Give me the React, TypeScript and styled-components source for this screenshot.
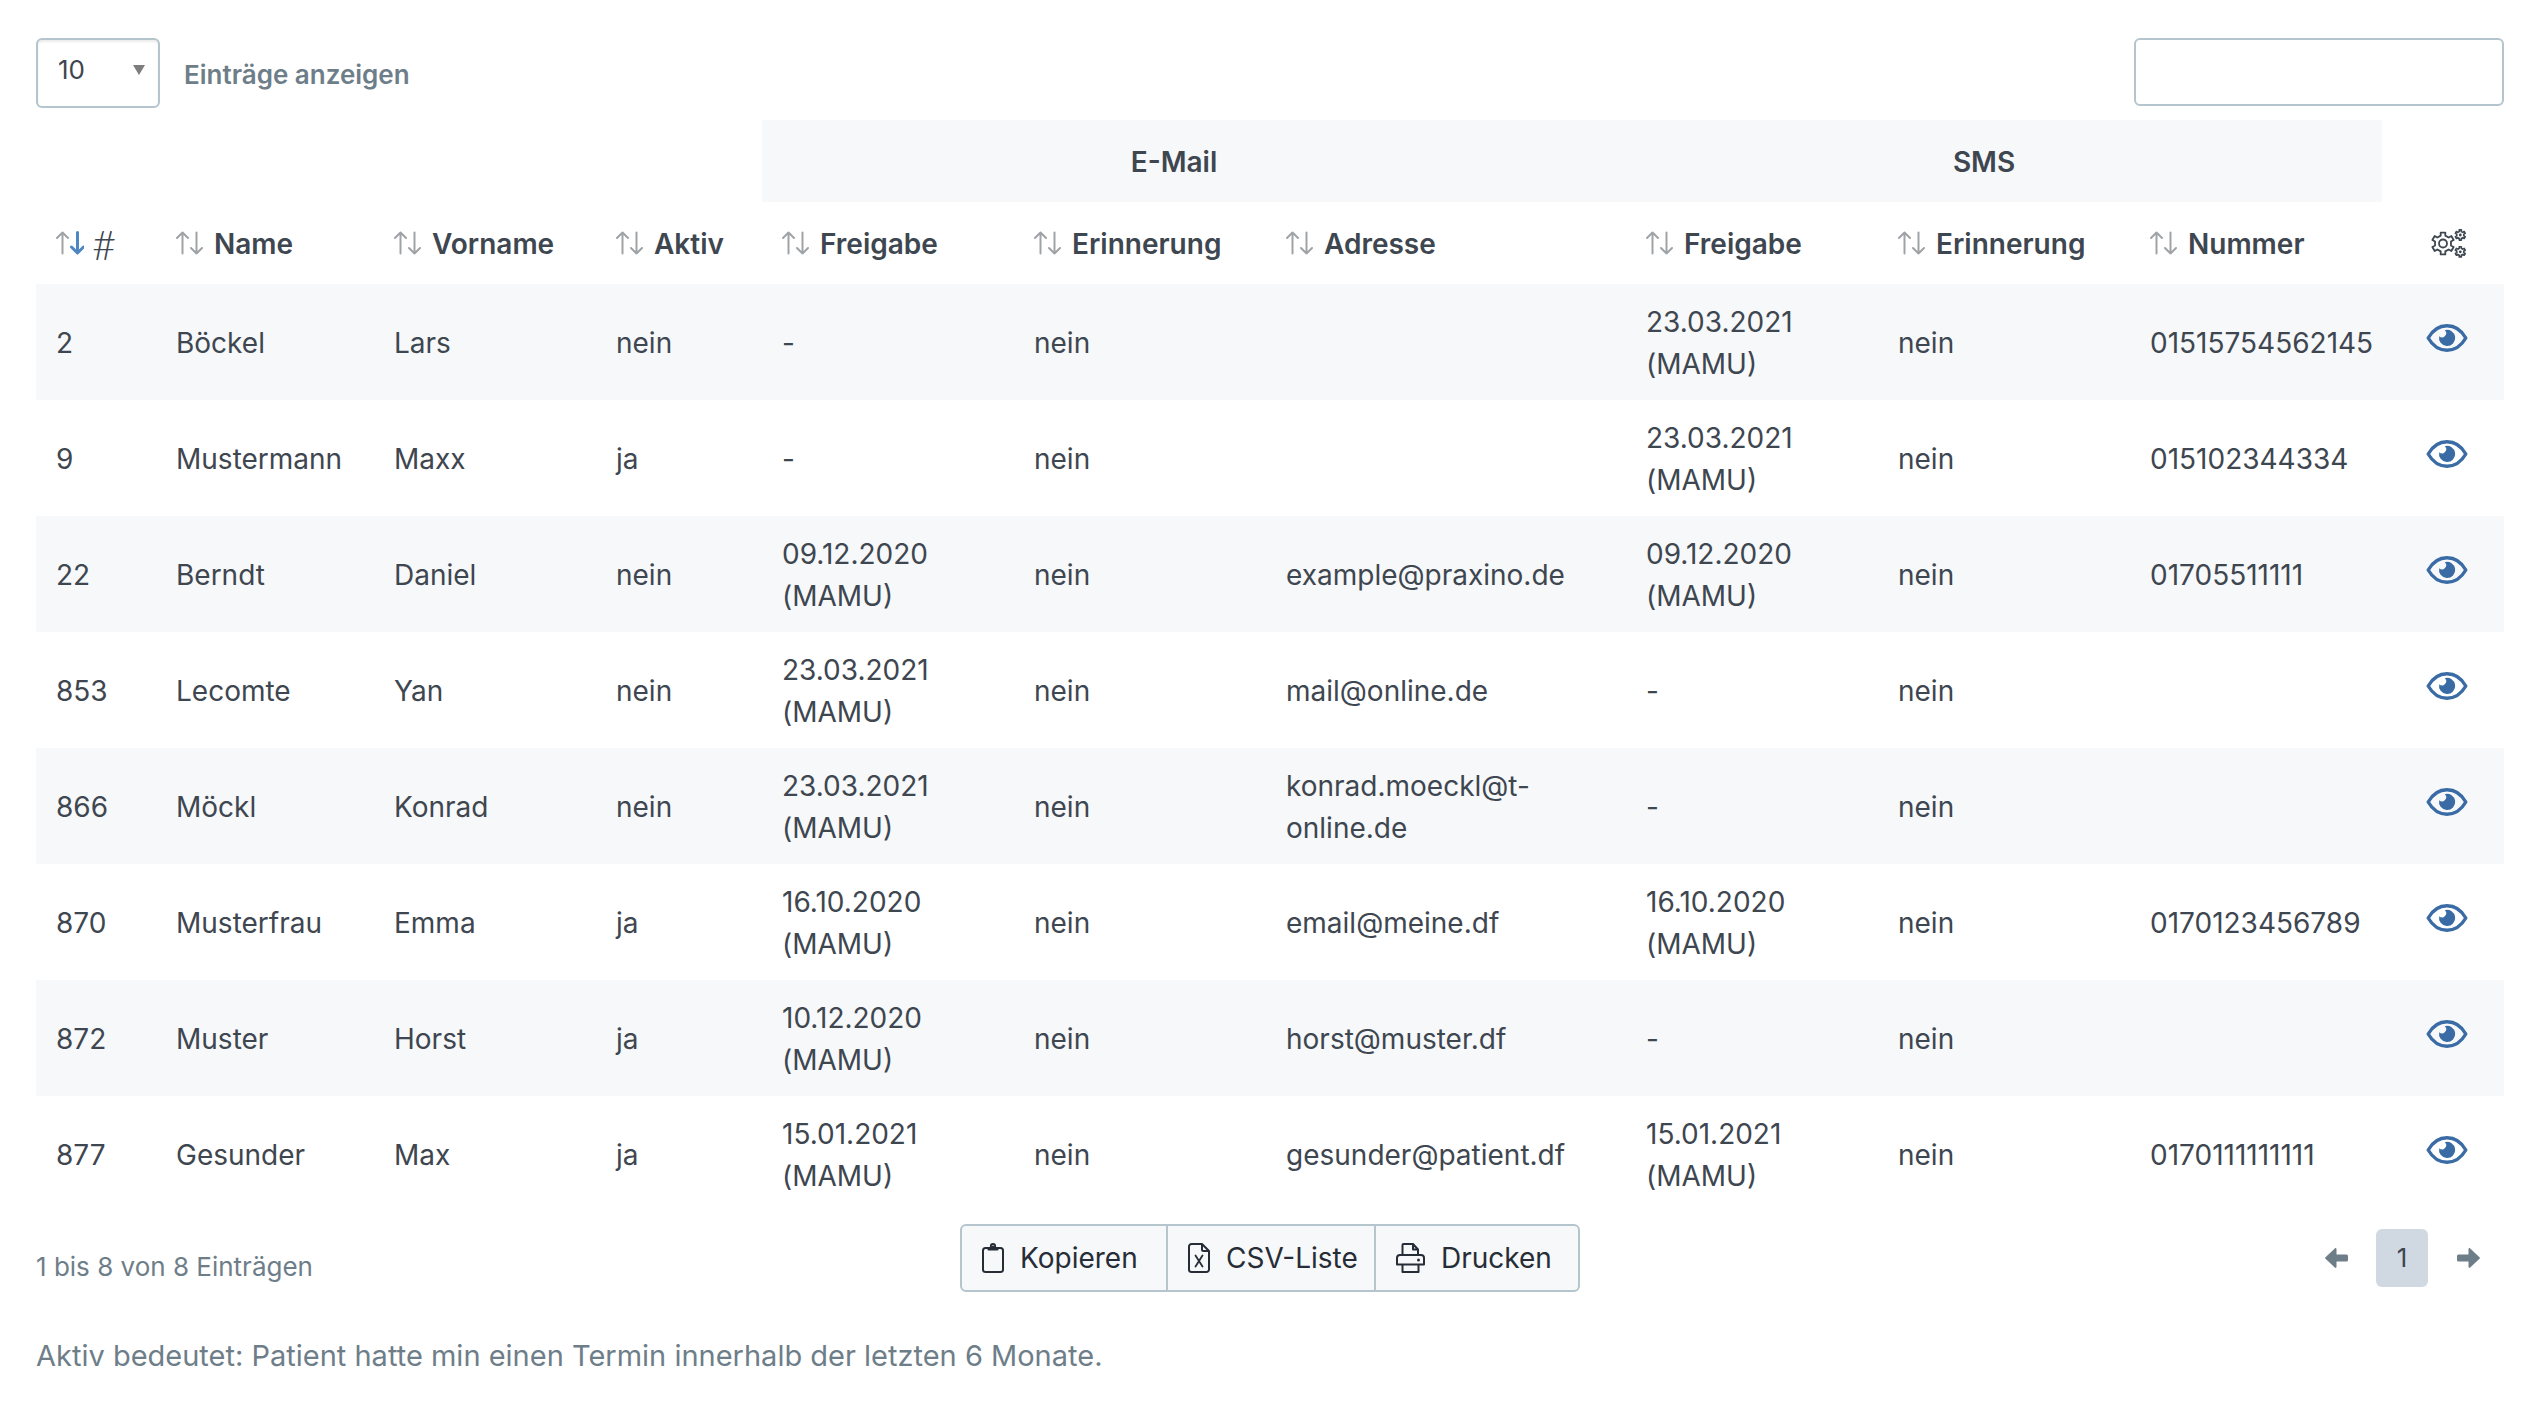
import React from "react";
import styled, { createGlobalStyle } from "styled-components";

const color = {
  text: "#3e4650",
  dark: "#262d36",
  muted: "#6e7e89",
  border: "#b5c5ce",
  stripe: "#f6f8fa",
  page: "#d0d8e2",
  link: "#3a6ba5",
  sortIdle: "#9fa3a6",
  sortActive: "#4d86c0",
};

const GlobalStyle = createGlobalStyle`
  *, *::before, *::after { box-sizing: border-box; }
  body {
    margin: 0;
    background: #fff;
    color: ${color.text};
    font-family: Inter, "Noto Sans", sans-serif;
    font-size: 28px;
    line-height: 42px;
  }
  button, input, select { font: inherit; color: inherit; }
`;

const Page = styled.main`
  padding: 38px 38px 38px 36px;
`;

const Toolbar = styled.div`
  display: flex;
  justify-content: space-between;
  align-items: flex-start;
  height: 82px;
`;

const LengthLabel = styled.label`
  display: flex;
  align-items: center;
  gap: 24px;
  color: ${color.muted};
  font-size: 26px;
  font-weight: 600;
`;

const LengthText = styled.span`
  padding-top: 4px;
`;

const SelectBox = styled.span`
  position: relative;
  display: block;
  width: 124px;
  height: 70px;

  svg {
    position: absolute;
    right: 15px;
    top: 27px;
    pointer-events: none;
  }
`;

const Select = styled.select`
  appearance: none;
  width: 100%;
  height: 100%;
  padding: 0 36px 6px 20px;
  border: 2px solid ${color.border};
  border-radius: 6px;
  background: #fff;
  box-shadow: inset 0 2px 2px rgba(0, 0, 0, 0.08);
  color: ${color.text};
  font-weight: 400;
`;

const Search = styled.input`
  width: 370px;
  height: 68px;
  padding: 0 20px;
  border: 2px solid ${color.border};
  border-radius: 6px;
  background: #fff;
`;

const Table = styled.table`
  width: 100%;
  table-layout: fixed;
  border-collapse: collapse;
`;

const Spacer = styled.td`
  padding: 0;
`;

const GroupHead = styled.th`
  padding: 21px 60px 19px 20px;
  background: ${color.stripe};
  font-weight: 600;
  text-align: center;
`;

const Head = styled.th`
  padding: 21px 0 19px 20px;
  font-weight: 600;
  text-align: left;
`;

const SortButton = styled.button<{ $tight?: boolean }>`
  display: flex;
  align-items: center;
  gap: ${(p) => (p.$tight ? 8 : 10)}px;
  padding: 0;
  border: 0;
  background: none;
  font-weight: 600;
  white-space: nowrap;
  cursor: pointer;

  svg { margin-bottom: 2px; }
`;

const Hash = styled.span`
  font-family: Lato, sans-serif;
  font-size: 42px;
  font-weight: 300;
  line-height: 42px;
`;

const Row = styled.tr`
  height: 116px;

  &:nth-child(odd) {
    background: ${color.stripe};
  }
`;

const Cell = styled.td`
  padding: 17px 20px 15px;
  vertical-align: middle;
`;

const IconHead = styled.th`
  padding: 0 0 0 12px;
  text-align: center;

  svg { display: block; margin: 0 auto; }
`;

const IconCell = styled.td`
  padding: 0 0 0 8px;
  text-align: center;
  vertical-align: middle;
`;

const ViewLink = styled.a`
  display: inline-block;
  color: ${color.link};

  svg { display: block; }
`;

const Footer = styled.div`
  display: grid;
  grid-template-columns: 1fr auto 1fr;
  align-items: center;
  margin-top: 12px;
`;

const Info = styled.p`
  margin: 0;
  padding-top: 18px;
  color: ${color.muted};
  font-size: 26px;
`;

const ButtonGroup = styled.div`
  display: flex;
  border: 2px solid ${color.border};
  border-radius: 6px;
  background: #f7f8fa;
`;

const ExportButton = styled.button<{ $width: number }>`
  display: flex;
  align-items: center;
  gap: 16px;
  width: ${(p) => p.$width}px;
  height: 64px;
  padding: 0 0 0 20px;
  border: 0;
  background: none;
  color: ${color.dark};
  white-space: nowrap;
  cursor: pointer;

  & + & { border-left: 2px solid ${color.border}; }
`;

const Pager = styled.nav`
  display: flex;
  align-items: center;
  justify-content: flex-end;
  gap: 12px;
  padding-right: 8px;
  color: ${color.muted};
`;

const PagerArrow = styled.button`
  display: grid;
  place-items: center;
  width: 56px;
  height: 58px;
  padding: 0;
  border: 0;
  background: none;
  cursor: pointer;
`;

const PagerPage = styled.button`
  width: 52px;
  height: 58px;
  padding: 0;
  border: 0;
  border-radius: 6px;
  background: ${color.page};
  color: ${color.text};
  font-size: 26px;
  cursor: pointer;
`;

const Note = styled.p`
  margin: 43px 0 0;
  color: ${color.muted};
  font-size: 29px;
`;

const SortIcon = ({ active }: { active?: boolean }) => (
  <svg width="28" height="24" viewBox="0 0 28 24" fill="none" strokeLinecap="round" strokeLinejoin="round" aria-hidden="true">
    <path d="M6.5 22.5V1.5M1 7l5.5-5.5L12 7" stroke={color.sortIdle} strokeWidth="2" />
    <path
      d={active ? "M21.5 1.5v20M15.5 16l6 6 6-6" : "M20.5 1.5v21M15 17l5.5 5.5L26 17"}
      stroke={active ? color.sortActive : color.sortIdle}
      strokeWidth={active ? 3 : 2}
    />
  </svg>
);

const EyeIcon = () => (
  <svg width="42" height="28" viewBox="0 0 42 28" aria-hidden="true">
    <path
      d="M2.2 14C6.5 6.5 13 1.8 21 1.8S35.5 6.5 39.8 14C35.5 21.5 29 26.2 21 26.2S6.500 21.500 2.200 14Z"
      fill="none"
      stroke="currentColor"
      strokeWidth="3.400"
      strokeLinejoin="round"
    />
    <path d="M18.800 6.200A8.100 8.100 0 1 1 13.200 12.200A4 4 0 0 0 18.800 6.200Z" fill="currentColor" />
  </svg>
);

const gear = (cx: number, cy: number, r: number, tooth: number, count: number) => {
  const step = (Math.PI * 2) / count;
  const at = (radius: number, angle: number) =>
    `${(cx + radius * Math.sin(angle)).toFixed(2)} ${(cy - radius * Math.cos(angle)).toFixed(2)}`;
  const points: string[] = [];
  for (let i = 0; i < count; i += 1) {
    const a = i * step;
    points.push(at(r, a - step * 0.27), at(r + tooth, a - step * 0.2), at(r + tooth, a + step * 0.2), at(r, a + step * 0.27));
  }
  return `M${points.join("L")}Z`;
};

const GearsIcon = () => (
  <svg width="36" height="29" viewBox="0 0 36 29" fill="none" stroke={color.text} strokeWidth="1.800" strokeLinejoin="round" aria-hidden="true">
    <path d={gear(12, 14.5, 8.2, 3, 6)} />
    <circle cx="12" cy="14.500" r="4" />
    <path d={gear(29.3, 6, 3.6, 1.6, 6)} strokeWidth="1.600" />
    <circle cx="29.300" cy="6" r="1.400" fill={color.text} stroke="none" />
    <path d={gear(29.3, 22.8, 3.6, 1.6, 6)} strokeWidth="1.600" />
    <circle cx="29.300" cy="22.800" r="1.400" fill={color.text} stroke="none" />
  </svg>
);

const ClipboardIcon = () => (
  <svg width="22" height="30" viewBox="0 0 22 30" fill="none" stroke="currentColor" strokeWidth="2" aria-hidden="true">
    <rect x="1" y="5" width="20" height="24" rx="2.500" />
    <path d="M5.500 4.500h3a2.600 2.600 0 0 1 5 0h3v2a1 1 0 0 1-1 1h-9a1 1 0 0 1-1-1z" fill="currentColor" stroke="none" />
    <path d="M8.800 5V3.200a2.200 2.200 0 0 1 4.400 0V5" strokeWidth="1.800" />
  </svg>
);

const SheetIcon = () => (
  <svg width="22" height="30" viewBox="0 0 22 30" fill="none" stroke="currentColor" strokeWidth="2" strokeLinejoin="round" aria-hidden="true">
    <path d="M3.500 1H14l7 7v18.500a2.500 2.500 0 0 1-2.500 2.500h-15A2.500 2.500 0 0 1 1 26.500v-23A2.500 2.500 0 0 1 3.500 1Z" />
    <path d="M14 1v5.500A1.500 1.500 0 0 0 15.500 8H21" />
    <path d="M7.500 12.500l7 11M14.500 12.500l-7 11" strokeWidth="1.800" strokeLinecap="round" />
  </svg>
);

const PrinterIcon = () => (
  <svg width="29" height="30" viewBox="0 0 29 30" fill="none" stroke="currentColor" strokeWidth="2" strokeLinejoin="round" aria-hidden="true">
    <path d="M6.500 12V2a1 1 0 0 1 1-1H17l5 5.500V12M17 1v5.500h5" />
    <path d="M6 21.500H1V15a3 3 0 0 1 3-3h21a3 3 0 0 1 3 3v6.500h-5" />
    <path d="M6.500 21.500h16V29h-16z" />
    <circle cx="22.500" cy="17" r="1.500" fill="currentColor" stroke="none" />
  </svg>
);

const ArrowIcon = ({ right }: { right?: boolean }) => (
  <svg width="23" height="20" viewBox="0 0 23 20" fill="currentColor" aria-hidden="true">
    <path
      d={
        right
          ? "M11.500 1.200v5.300H1.500A1.500 1.500 0 0 0 0 8v4a1.500 1.500 0 0 0 1.500 1.500h10v5.300c0 1.100 1 1.400 1.700.7l9.300-8.700a1.100 1.100 0 0 0 0-1.600L13.200.5c-.7-.7-1.700-.4-1.700.7z"
          : "M11.500 1.200v5.300h10A1.500 1.500 0 0 1 23 8v4a1.500 1.500 0 0 1-1.500 1.500h-10v5.300c0 1.100-1 1.400-1.700.7L.5 10.800a1.100 1.100 0 0 1 0-1.600L9.800.5c.7-.7 1.700-.4 1.700.7z"
      }
    />
  </svg>
);

const columnWidths = [120, 218, 222, 166, 252, 252, 360, 252, 252, 252, 122];

const headings = ["Name", "Vorname", "Aktiv", "Freigabe", "Erinnerung", "Adresse", "Freigabe", "Erinnerung", "Nummer"];

const patients = [
  ["2", "Böckel", "Lars", "nein", "-", "nein", "", "23.03.2021 (MAMU)", "nein", "01515754562145"],
  ["9", "Mustermann", "Maxx", "ja", "-", "nein", "", "23.03.2021 (MAMU)", "nein", "015102344334"],
  ["22", "Berndt", "Daniel", "nein", "09.12.2020 (MAMU)", "nein", "example@praxino.de", "09.12.2020 (MAMU)", "nein", "01705511111"],
  ["853", "Lecomte", "Yan", "nein", "23.03.2021 (MAMU)", "nein", "mail@online.de", "-", "nein", ""],
  ["866", "Möckl", "Konrad", "nein", "23.03.2021 (MAMU)", "nein", "konrad.moeckl@t-online.de", "-", "nein", ""],
  ["870", "Musterfrau", "Emma", "ja", "16.10.2020 (MAMU)", "nein", "email@meine.df", "16.10.2020 (MAMU)", "nein", "0170123456789"],
  ["872", "Muster", "Horst", "ja", "10.12.2020 (MAMU)", "nein", "horst@muster.df", "-", "nein", ""],
  ["877", "Gesunder", "Max", "ja", "15.01.2021 (MAMU)", "nein", "gesunder@patient.df", "15.01.2021 (MAMU)", "nein", "0170111111111"],
];

export default function App() {
  return (
    <>
      <GlobalStyle />
      <Page>
        <Toolbar>
          <LengthLabel>
            <SelectBox>
              <Select defaultValue="10">
                <option>10</option>
                <option>25</option>
                <option>50</option>
              </Select>
              <svg width="12" height="10" viewBox="0 0 12 10" aria-hidden="true">
                <path d="M0 0h12L6 10z" fill="#7d7d7d" />
              </svg>
            </SelectBox>
            <LengthText>Einträge anzeigen</LengthText>
          </LengthLabel>
          <Search type="search" aria-label="Suchen" />
        </Toolbar>

        <Table>
          <colgroup>
            {columnWidths.map((width, i) => (
              <col key={i} width={width} />
            ))}
          </colgroup>
          <thead>
            <tr>
              <Spacer colSpan={4} />
              <GroupHead colSpan={3} scope="colgroup">E-Mail</GroupHead>
              <GroupHead colSpan={3} scope="colgroup">SMS</GroupHead>
              <Spacer />
            </tr>
            <tr>
              <Head scope="col" aria-sort="ascending">
                <SortButton type="button" $tight>
                  <SortIcon active />
                  <Hash>#</Hash>
                </SortButton>
              </Head>
              {headings.map((heading, i) => (
                <Head key={i} scope="col">
                  <SortButton type="button">
                    <SortIcon />
                    {heading}
                  </SortButton>
                </Head>
              ))}
              <IconHead scope="col" aria-label="Aktionen">
                <GearsIcon />
              </IconHead>
            </tr>
          </thead>
          <tbody>
            {patients.map((patient) => (
              <Row key={patient[0]}>
                {patient.map((value, i) => (
                  <Cell key={i}>{value}</Cell>
                ))}
                <IconCell>
                  <ViewLink href={`#patient-${patient[0]}`} aria-label={`${patient[2]} ${patient[1]} ansehen`}>
                    <EyeIcon />
                  </ViewLink>
                </IconCell>
              </Row>
            ))}
          </tbody>
        </Table>

        <Footer>
          <Info>1 bis 8 von 8 Einträgen</Info>
          <ButtonGroup>
            <ExportButton type="button" $width={204}>
              <ClipboardIcon />
              Kopieren
            </ExportButton>
            <ExportButton type="button" $width={208}>
              <SheetIcon />
              CSV-Liste
            </ExportButton>
            <ExportButton type="button" $width={204}>
              <PrinterIcon />
              Drucken
            </ExportButton>
          </ButtonGroup>
          <Pager aria-label="Seiten">
            <PagerArrow type="button" aria-label="Zurück">
              <ArrowIcon />
            </PagerArrow>
            <PagerPage type="button" aria-current="page">1</PagerPage>
            <PagerArrow type="button" aria-label="Weiter">
              <ArrowIcon right />
            </PagerArrow>
          </Pager>
        </Footer>

        <Note>Aktiv bedeutet: Patient hatte min einen Termin innerhalb der letzten 6 Monate.</Note>
      </Page>
    </>
  );
}
